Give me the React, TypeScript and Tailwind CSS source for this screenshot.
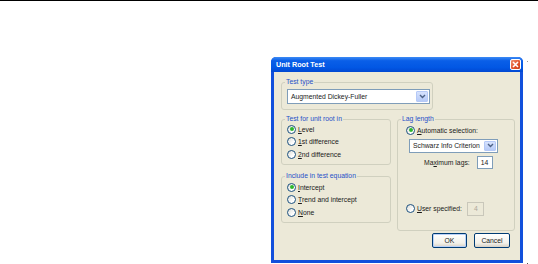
import React from "react";

function Radio({ checked }: { checked?: boolean }) {
  return (
    <span className="relative inline-flex w-[9px] h-[9px] shrink-0 rounded-full border border-[#1C5180] bg-[linear-gradient(135deg,#DCDCD6,#FFFFFF_70%)] items-center justify-center">
      {checked && <span className="w-[4px] h-[4px] rounded-full bg-[#2DB82D]" />}
    </span>
  );
}

function RadioRow({ checked, children }: { checked?: boolean; children: React.ReactNode }) {
  return (
    <div className="flex items-center h-[12.5px] gap-[2px]">
      <Radio checked={checked} />
      <span className="leading-[9px]">{children}</span>
    </div>
  );
}

function Arrow() {
  return (
    <span className="w-[12px] h-full shrink-0 rounded-[1px] border border-[#B5C9F7] bg-[linear-gradient(to_bottom,#D6E2FD,#B6CAF7)] flex items-center justify-center">
      <svg width="7" height="5" viewBox="0 0 7 5">
        <path d="M1 1 L3.5 3.5 L6 1" fill="none" stroke="#4D6185" strokeWidth="1.4" />
      </svg>
    </span>
  );
}

function Combo({ text, className }: { text: string; className: string }) {
  return (
    <div className={"flex items-center bg-white border border-[#7F9DB9] p-[1px] " + className}>
      <span className="flex-1 pl-[2px] leading-[9px] whitespace-nowrap overflow-hidden">{text}</span>
      <Arrow />
    </div>
  );
}

function Legend({ children, className }: { children: React.ReactNode; className: string }) {
  return <legend className={"px-[1px] leading-[8px] text-[#1F50C8] " + className}>{children}</legend>;
}

const fs = "border border-[#D0D0BF] rounded-[3px] min-w-0";

export default function App() {
  return (
    <div className="relative w-[538px] h-[264px] bg-white border-t border-black overflow-hidden font-['Liberation_Sans',Arial,sans-serif] text-[6.8px] text-[#1a1a1a]">
      <span className="absolute left-[527px] top-[60px] w-[1px] h-[1px] bg-[#9A9A9A]" />
      <span className="absolute left-[527px] top-[262px] w-[1px] h-[1px] bg-[#555]" />
      <div className="pt-[56px] pl-[271px]">
        <div className="w-[252px] h-[206px] flex flex-col rounded-t-[5px] bg-[#1250DC] overflow-hidden">
          <div className="h-[15px] shrink-0 flex items-center pl-[5px] pr-[2px] bg-[linear-gradient(to_bottom,#3D8BF5,#0A5FE8_25%,#0257E4_70%,#0148D2)]">
            <span className="flex-1 font-bold text-white leading-[9px] text-[7.2px]">Unit Root Test</span>
            <span className="w-[11px] h-[11px] rounded-[2px] border border-white bg-[linear-gradient(135deg,#F09070,#E2512A_60%,#C4401C)] flex items-center justify-center">
              <svg width="7" height="7" viewBox="0 0 7 7">
                <path d="M1 1 L6 6 M6 1 L1 6" stroke="white" strokeWidth="1.6" />
              </svg>
            </span>
          </div>
          <div className="flex-1 mx-[3px] mb-[3px] bg-[#ECE9D8] pl-[7px] pt-[6px] flex flex-col">
            <fieldset className={fs + " w-[152px] h-[32px] pl-[5px] pt-[3px]"}>
              <Legend className="-ml-[2px]">Test type</Legend>
              <Combo text="Augmented Dickey-Fuller" className="w-[143px] h-[15px]" />
            </fieldset>
            <div className="flex gap-[6px] mt-[5px]">
              <div className="flex flex-col w-[110px]">
                <fieldset className={fs + " h-[50px] pl-[5px] pt-[0px]"}>
                  <Legend className="-ml-[2px]">Test for unit root in</Legend>
                  <RadioRow checked>
                    <u>L</u>evel
                  </RadioRow>
                  <RadioRow>
                    <u>1</u>st difference
                  </RadioRow>
                  <RadioRow>
                    <u>2</u>nd difference
                  </RadioRow>
                </fieldset>
                <fieldset className={fs + " h-[51px] mt-[7px] pl-[5px] pt-[1px]"}>
                  <Legend className="-ml-[2px]">Include in test equation</Legend>
                  <RadioRow checked>
                    <u>I</u>ntercept
                  </RadioRow>
                  <RadioRow>
                    <u>T</u>rend and intercept
                  </RadioRow>
                  <RadioRow>
                    <u>N</u>one
                  </RadioRow>
                </fieldset>
              </div>
              <fieldset className={fs + " w-[118px] h-[116px] pl-[8px] pt-[0px] flex flex-col"}>
                <Legend className="-ml-[5px]">Lag length</Legend>
                <div className="mt-[1px]">
                  <RadioRow checked>
                    <u>A</u>utomatic selection:
                  </RadioRow>
                </div>
                <Combo text="Schwarz Info Criterion" className="ml-[3px] mt-[2px] w-[89px] h-[14px]" />
                <div className="flex items-center ml-[18px] mt-[3px] gap-[7px]">
                  <span className="leading-[9px]">
                    Ma<u>x</u>imum lags:
                  </span>
                  <span className="w-[16px] h-[13px] bg-white border border-[#7F9DB9] flex items-center pl-[3px] leading-[9px]">14</span>
                </div>
                <div className="flex items-center mt-[33px] gap-[2px]">
                  <Radio />
                  <span className="leading-[9px]">
                    <u>U</u>ser specified:
                  </span>
                  <span className="ml-[3px] w-[17px] h-[14px] bg-[#ECE9D8] border border-[#C9C7BA] flex items-center pl-[6px] leading-[9px] text-[#ACA899]">4</span>
                </div>
              </fieldset>
            </div>
            <div className="flex justify-end gap-[7px] pr-[10px] mt-[2px]">
              <button className="w-[35px] h-[15px] rounded-[2px] border border-[#003C74] bg-[linear-gradient(to_bottom,#FFFFFF,#F2F1EA_70%,#D6D0C5)] shadow-[inset_0_0_0_1px_#B9D1F8] leading-[9px]">
                OK
              </button>
              <button className="w-[36px] h-[15px] rounded-[2px] border border-[#003C74] bg-[linear-gradient(to_bottom,#FFFFFF,#F2F1EA_70%,#D6D0C5)] leading-[9px]">
                Cancel
              </button>
            </div>
          </div>
        </div>
      </div>
    </div>
  );
}
